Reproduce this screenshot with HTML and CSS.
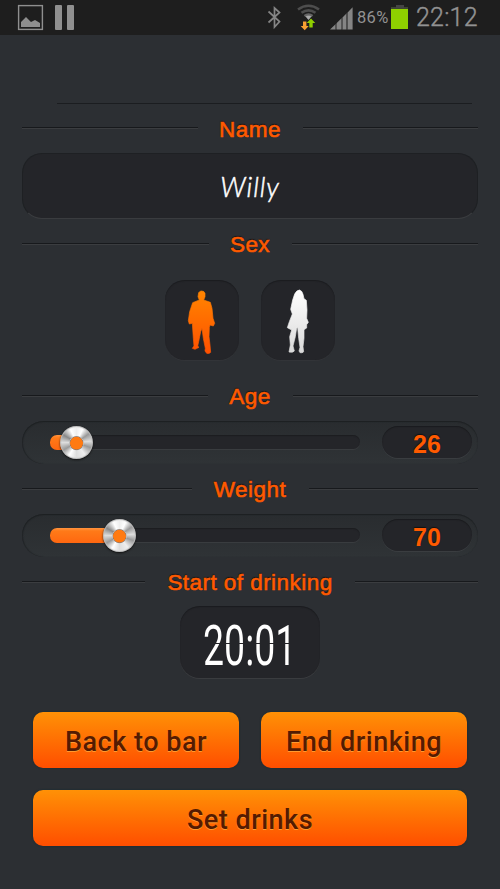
FILE: index.html
```html
<!DOCTYPE html>
<html lang="en">
<head>
<meta charset="utf-8">
<title>Drinker profile</title>
<link rel="stylesheet" href="styles.css">
</head>
<body>
<header class="status">
  <svg class="notices" width="60" height="30" viewBox="0 0 60 30">
    <rect x="1.6" y="4.600" width="23.8" height="23.8" fill="none" stroke="#8f8f8f" stroke-width="1.4"/>
    <path d="M4 26v-5l5-5 5 5 4-2 5 3v4z" fill="#8f8f8f"/>
    <rect x="38" y="4" width="7" height="25" rx="1" fill="#909090"/>
    <rect x="50" y="4" width="7" height="25" rx="1" fill="#909090"/>
  </svg>
  <svg class="signals" width="90" height="30" viewBox="265 0 90 30">
    <path d="M268.500 10.500l11 10-5 5.500V7l5 4.500-11 10" fill="none" stroke="#858585" stroke-width="1.700"/>
    <g fill="none" stroke="#4d4d4d" stroke-width="2.600">
      <path d="M298 8.500q10.500-7.500 21 0"/>
      <path d="M301.500 11.800q7-5 14 0"/>
      <path d="M304.500 15q4-3 8 0" stroke="#666"/>
    </g>
    <path d="M305.500 15.500q3-2 6 0l-3 3.500z" fill="#aaa"/>
    <path d="M303 20.500h3.400v4.500h2.300l-4 4.300-4-4.300h2.300z" fill="#f8a033"/>
    <path d="M309.300 26.500h3.400v-4.500h2.600l-4.300-4.500-4.300 4.500h2.600z" fill="#8fce00"/>
    <path d="M330 28.500l5.500-5.300v5.300zM337 21.800l4-4v10.700h-4zM342.500 16.500l3.700-3.700v15.700h-3.700zM347.600 11.500l5-5.200v22.200h-5z" fill="#858585"/>
    <path d="M335.500 23.200l1.500-1.400v6.700h-1.500zM341 17.800l1.500-1.300v12H341zM346.200 12.800l1.400-1.300v17h-1.400z" fill="#555"/>
  </svg>
  <span class="percent">86%</span>
  <span class="battery"></span>
  <span class="time">22:12</span>
</header>
<main class="profile">
  <div class="rule"></div>
  <h2 class="heading"><span class="label name">Name</span></h2>
  <div class="field">Willy</div>
  <h2 class="heading"><span class="label sex">Sex</span></h2>
  <div class="choices">
    <div class="choice">
      <svg width="74" height="80" viewBox="45 30 222 240">
        <defs><linearGradient id="man" x2="0" y2="1"><stop stop-color="#ff8500"/><stop offset="1" stop-color="#ff5000"/></linearGradient></defs>
        <path fill="url(#man)" stroke="url(#man)" stroke-width="2" stroke-linejoin="round" d="M155 63Q163 63 165 70L165 80 161 90 181 97 186 115 189 145 194 160 190 168 180 165 178 172 177 200 180 225 182 247Q178 252 170 250L165 243 166 235 160 205 156 175 152 185 146 215 143 228 147 232 135 238 127 235 132 228 130 205 127 160 118 162 115 152 119 125 128 98 148 90 144 80 146 68Q149 63 155 63z"/>
      </svg>
    </div>
    <div class="choice">
      <svg width="74" height="80" viewBox="333 30 222 240">
        <defs><linearGradient id="woman" x2="0" y2="1"><stop stop-color="#fff"/><stop offset="1" stop-color="#d9d9d9"/></linearGradient></defs>
        <path fill="url(#woman)" stroke="url(#woman)" stroke-width="2" stroke-linejoin="round" d="M449 60Q457 63 459 73L462 86 469 91 471 120 470 145 475 157 470 164 470 174 462 179 462 205 459 230 461 245Q457 250 450 248L447 243 450 232 446 205 443 173 440 174 436 200 429 228 433 243Q429 249 417 246L421 225 419 200 425 180 412 173 418 155 427 132 422 118 428 90 434 72Q440 60 449 60z"/>
      </svg>
    </div>
  </div>
  <h2 class="heading"><span class="label age">Age</span></h2>
  <div class="slider">
    <div class="track"><div class="fill" style="width:26px"></div><div class="knob" style="left:26px"></div></div>
    <div class="value">26</div>
  </div>
  <h2 class="heading"><span class="label weight">Weight</span></h2>
  <div class="slider">
    <div class="track"><div class="fill" style="width:70px"></div><div class="knob" style="left:69.500px"></div></div>
    <div class="value">70</div>
  </div>
  <h2 class="heading"><span class="label start">Start of drinking</span></h2>
  <div class="clock"><span>20:01</span></div>
  <div class="actions">
    <button>Back to bar</button>
    <button>End drinking</button>
    <button class="wide">Set drinks</button>
  </div>
</main>
</body>
</html>
```
FILE: styles.css
```css
* { box-sizing: border-box; }
body {
  margin: 0;
  width: 500px;
  height: 889px;
  overflow: hidden;
  background: #2c2f33;
  color: #ff5a00;
  font-family: "Liberation Sans", sans-serif;
}
.status {
  display: flex;
  align-items: flex-start;
  height: 35px;
  padding-left: 17px;
  padding-top: 1px;
  background: #1e1e1e;
  color: #929292;
  font-family: Roboto, sans-serif;
}
.signals { margin-left: 188px; }
.percent {
  width: 33px;
  margin-left: 2px;
  font-size: 16.5px;
  line-height: 34px;
  letter-spacing: .3px;
  white-space: nowrap;
}
.battery {
  width: 17px;
  height: 24px;
  margin: 4px 0 0 1px;
  background: linear-gradient(#444, #444) 50% 0 / 8px 3px no-repeat,
    linear-gradient(#3d4432, #3d4432) 0 2px / 17px 2px no-repeat,
    linear-gradient(#8fd000, #8fd000) 0 4px / 17px 20px no-repeat;
}
.time {
  margin-left: 8px;
  font-size: 25px;
  font-weight: 300;
  line-height: 33px;
  letter-spacing: .2px;
  -webkit-text-stroke: .4px #929292;
}
.profile {
  display: flex;
  flex-direction: column;
  padding: 0 22px;
}
.rule {
  width: 415px;
  height: 1px;
  margin: 68px 0 9px 35px;
  background: #1b1d20;
}
.heading {
  display: flex;
  align-items: center;
  gap: 22px;
  height: 30px;
  margin: 0;
  font-size: 22.5px;
  font-weight: 400;
  line-height: 30px;
}
.heading::before, .heading::after {
  content: "";
  flex: 1;
  height: 2px;
  background: linear-gradient(#17191c 50%, #3b3d40 50%);
}
.label {
  position: relative;
  top: 1px;
  display: flex;
  justify-content: center;
  white-space: nowrap;
  letter-spacing: .45px;
  -webkit-text-stroke: .6px #ff5a00;
  text-shadow: 0 -1px 1px #111;
}
.name { top: 2px; width: 61px; }
.sex { width: 39px; }
.age { width: 41px; }
.weight { width: 73px; }
.start { width: 166px; }
.field {
  height: 66px;
  margin: 10px 0 10px;
  border: 1px solid #1e2023;
  border-bottom-color: #3a3c3f;
  border-radius: 20px;
  background: #242529;
  color: #fff;
  font: italic 300 27px/66px Lato, sans-serif;
  letter-spacing: .9px;
  text-align: center;
  -webkit-text-stroke: .5px #fff;
}
.choices {
  display: flex;
  justify-content: center;
  gap: 22px;
  margin: 21px 0 21px;
}
.choice {
  width: 74px;
  height: 80px;
  border-radius: 20px;
  background: #242529;
  box-shadow: inset 0 1px 1px #1b1c1f, 0 1px 0 #323438;
}
.choice svg { display: block; }
.slider {
  display: flex;
  align-items: center;
  justify-content: space-between;
  height: 43px;
  margin: 10px 0 10px;
  padding: 0 6px 1px 28px;
  border-radius: 22px;
  background: linear-gradient(#292c2f, #2f3336);
  box-shadow: inset 0 1px 1px #1d2022, inset 1px 0 1px #222528;
}
.track {
  position: relative;
  width: 310px;
  height: 14px;
  border-radius: 7px;
  background: #242529;
  box-shadow: inset 0 1px 1px #1c1d20, 0 1px 0 #393c3f;
}
.fill {
  height: 15px;
  border-radius: 7px 0 0 7px;
  background: linear-gradient(#ff9440, #ff7a18 20%, #ff6710);
}
.knob {
  position: absolute;
  top: -9px;
  width: 33px;
  height: 33px;
  margin-left: -16.5px;
  border-radius: 50%;
  background:
    radial-gradient(circle at 50% 52%, #ff7a12 0 6px, #9a7760 6.5px, #bbb 7px, transparent 7.5px),
    conic-gradient(#eee, #fff 25deg, #999 55deg, #ddd 85deg, #999 110deg, #eee 145deg, #ddd 180deg, #fff 210deg, #999 240deg, #ddd 270deg, #888 300deg, #fff 335deg, #eee);
  box-shadow: inset 0 0 1px 1px #bbb, 0 1px 2px #111;
}
.value {
  width: 90px;
  height: 32px;
  border-radius: 16px;
  background: #242529;
  box-shadow: inset 0 1px 1px #1a1b1e, 0 1px 0 #3a3d40;
  font-size: 25px;
  font-weight: 700;
  line-height: 36px;
  text-align: center;
  text-shadow: 0 -1px 1px #111;
}
.clock {
  display: flex;
  justify-content: center;
  width: 140px;
  height: 72px;
  margin: 9px auto 0;
  border-radius: 20px;
  background: #242529;
  box-shadow: inset 0 1px 1px #1a1b1e, 0 1px 0 #3a3c3f;
  color: #fff;
  font: 400 56px/80px Roboto, sans-serif;
}
.clock span {
  transform: scaleX(.67);
  background: linear-gradient(#fff 37px, #242529 37px 38px, #fff 38px);
  -webkit-background-clip: text;
  background-clip: text;
  color: transparent;
}
.actions {
  display: grid;
  grid-template-columns: 206px 206px;
  gap: 22px;
  margin: 34px 11px 0;
}
.actions button {
  height: 56px;
  padding: 4px 0 0;
  border: 0;
  border-radius: 10px;
  background: linear-gradient(#ff9106, #ff4e00);
  box-shadow: 0 0 2px #0c2a35;
  color: #541b02;
  font: 500 27px/53px Roboto, sans-serif;
  letter-spacing: .5px;
  text-shadow: 0 1px 0 #ff9a30;
}
.actions .wide { grid-column: 1 / 3; }
```
